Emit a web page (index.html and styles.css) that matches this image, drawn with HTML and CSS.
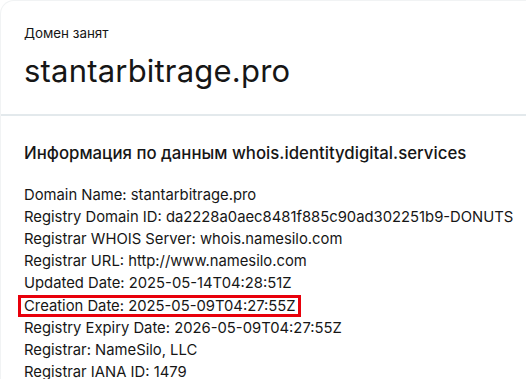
FILE: index.html
```html
<!DOCTYPE html>
<html lang="ru">
<head>
<meta charset="utf-8">
<title>Домен занят</title>
<link rel="stylesheet" href="styles.css">
</head>
<body>
<div class="card">
  <section class="head">
    <div class="status">Домен занят</div>
    <h1 class="domain">stantarbitrage.pro</h1>
  </section>
  <section class="whois">
    <h2 class="source">Информация по данным whois.identitydigital.services</h2>
    <div class="lines">
      <div class="line">Domain Name: stantarbitrage.pro</div>
      <div class="line">Registry Domain ID: da2228a0aec8481f885c90ad302251b9-DONUTS</div>
      <div class="line">Registrar WHOIS Server: whois.namesilo.com</div>
      <div class="line">Registrar URL: http://www.namesilo.com</div>
      <div class="line">Updated Date: 2025-05-14T04:28:51Z</div>
      <div class="line"><span class="mark">Creation Date: 2025-05-09T04:27:55Z</span></div>
      <div class="line">Registry Expiry Date: 2026-05-09T04:27:55Z</div>
      <div class="line">Registrar: NameSilo, LLC</div>
      <div class="line">Registrar IANA ID: 1479</div>
    </div>
  </section>
</div>
</body>
</html>
```
FILE: styles.css
```css
html, body {
  margin: 0;
  padding: 0;
  background: #fff;
}
body {
  font-family: Inter, "Noto Sans", sans-serif;
  color: #161616;
}
.card {
  border-top-left-radius: 14px;
  border-left: 1px solid #f1f3f4;
  border-top: 1px solid #f1f3f4;
  min-height: 379px;
  box-sizing: border-box;
}
.head {
  padding: 23px 23px 0;
  height: 115px;
  box-sizing: border-box;
  border-bottom: 2px solid #e3e9ec;
}
.status {
  font-size: 13.4px;
  line-height: 18px;
}
.domain {
  margin: 12px 0 0;
  font-size: 31px;
  line-height: 34px;
  font-weight: 400;
  letter-spacing: 0.2px;
}
.whois {
  padding: 25px 0 0 23px;
}
.source {
  margin: 0;
  font-size: 16.8px;
  line-height: 24px;
  font-weight: 500;
  white-space: nowrap;
}
.lines {
  margin-top: 19px;
  font-size: 14.8px;
  line-height: 22.1px;
}
.line {
  height: 22.1px;
  display: flex;
  align-items: center;
  white-space: nowrap;
}
.mark {
  display: inline-block;
  line-height: 16px;
  height: 16px;
  outline: 3px solid #e8000b;
  margin-left: -3px;
  padding-left: 3px;
  padding-right: 2px;
}
```
